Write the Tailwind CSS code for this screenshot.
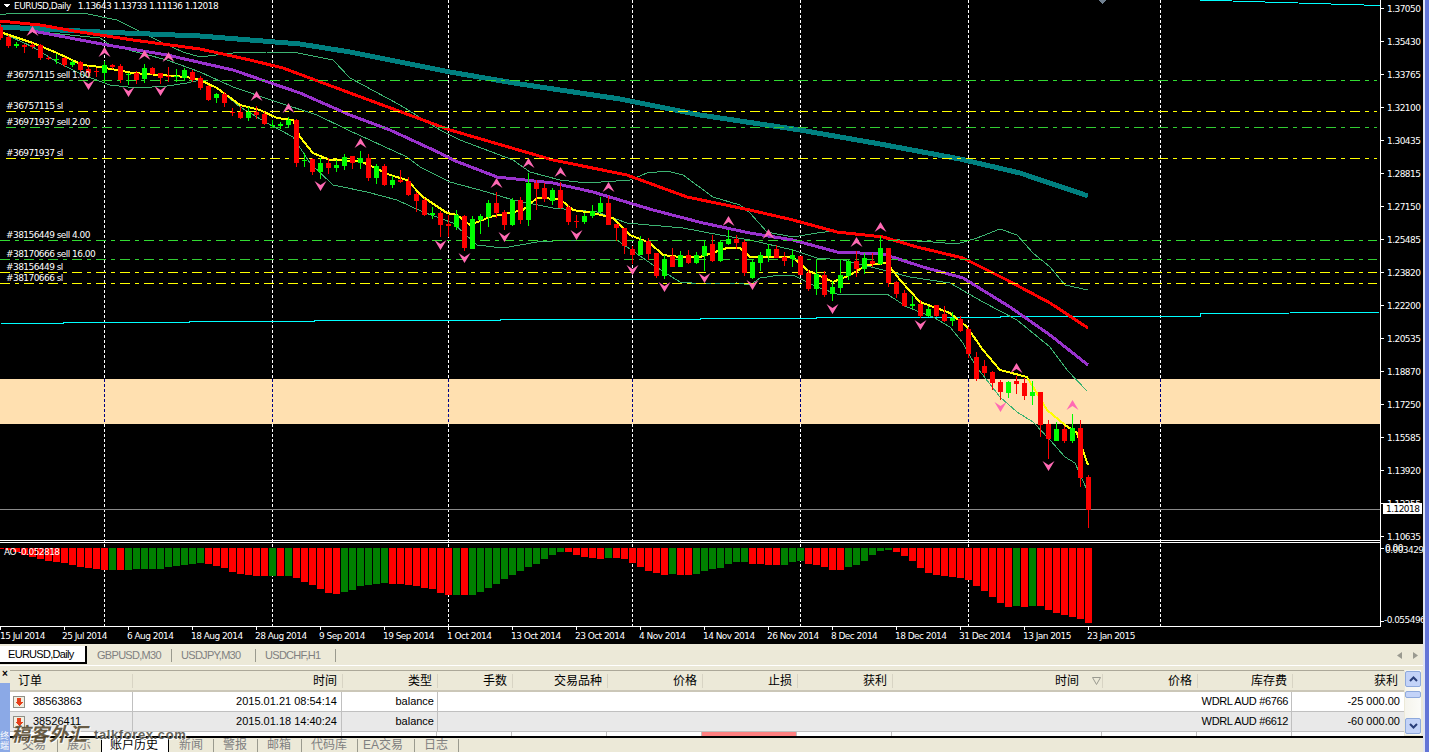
<!DOCTYPE html>
<html lang="zh">
<head>
<meta charset="utf-8">
<title>MT4 EURUSD</title>
<script src="https://cdn.jsdelivr.net/npm/@tailwindcss/browser@4"></script>
</head>
<body class="m-0 bg-[#ece9d8]">
<div class="relative flex h-[752px] w-[1429px] overflow-hidden bg-[#ece9d8] font-['Liberation_Sans','Noto_Sans_CJK_SC',sans-serif] text-[11px] text-black">
  <div class="flex h-full w-[1423px] flex-col">
    <!-- chart -->
    <div class="relative h-[644px] w-full bg-black">
      <svg id="chart" width="1423" height="644" viewBox="0 0 1423 644" class="block fill-white font-['DejaVu_Sans',sans-serif] text-[9px] tracking-[-0.55px]">
        <rect x="0" y="379" width="1380" height="45" fill="#ffe0b0"/>
        <g id="grid" shape-rendering="crispEdges"></g>
        <g fill="none" shape-rendering="crispEdges">
          <polyline stroke="#00ffff" points="1,323 63,323 63,322 189,322 189,321 314,321 314,320 500,320 500,319 700,319 700,318 816,318 816,317 1000,317 1000,316 1200,316 1200,314 1380,312"/>
          <polyline stroke="#00ffff" points="1199,0 1232,1 1265,2 1298,3 1331,4 1364,5 1381,5"/>
          <polyline stroke="#3cb371" points="0,15 13,13 33,13 83,13 117,20 143,33 163,43 183,52 200,57 233,53 267,52 293,52 333,60 350,78 400,105 440,130 460,140 513,160 530,172 560,180 587,183 630,180 647,173 667,171 683,175 713,197 740,205 750,213 767,232 793,237 817,233 833,231 867,235 900,240 933,242 957,244 977,238 1000,229 1017,235 1033,253 1050,267 1065,285 1088,290"/>
          <polyline stroke="#3cb371" points="0,26 40,32 100,38 110,45 140,53 167,60 200,72 233,87 277,102 317,115 348,130 407,157 420,167 450,182 487,192 513,200 553,208 597,212 627,223 683,228 720,235 750,240 793,250 817,258 843,260 883,270 910,277 950,283 983,302 1017,320 1050,347 1067,370 1087,391"/>
          <polyline stroke="#3cb371" points="0,32 33,47 57,62 83,75 110,85 137,88 167,86 187,83 200,80 217,88 240,107 267,123 293,137 310,163 333,185 367,192 397,200 423,212 453,223 477,245 503,248 537,242 570,240 617,240 653,265 680,282 703,284 737,283 750,285 760,278 780,275 793,275 817,287 837,294 860,294 887,294 907,307 933,317 950,327 963,343 975,365 1000,397 1017,412 1033,422 1050,440 1065,457 1075,463 1087,490"/>
          <polyline stroke="#008080" stroke-width="5" points="0,27 100,32 200,36 300,44 350,52 450,72 520,84 620,99 700,115 800,130 880,144 960,159 1020,173 1088,196"/>
          <polyline stroke="#ff0000" stroke-width="3" points="0,21 40,25 80,32 100,35 133,40 200,49 250,60 283,68 350,93 450,130 553,160 627,175 687,197 750,210 793,220 837,232 883,237 917,247 963,258 1007,280 1050,303 1088,328"/>
          <polyline stroke="#9932cc" stroke-width="3" points="33,31 107,45 167,55 233,70 300,93 350,115 390,130 440,153 453,160 497,177 553,183 593,192 653,210 703,223 750,233 793,240 837,252 883,254 923,267 963,278 1010,307 1050,335 1088,365"/>
          <polyline stroke="#ffff00" stroke-width="2" points="0,32 33,43 57,53 83,65 100,67 133,73 187,77 200,80 217,88 240,105 260,110 277,118 293,120 300,137 313,153 330,160 360,161 390,175 407,180 423,197 447,213 457,215 470,225 490,217 523,210 537,198 560,199 573,210 593,213 613,218 630,235 650,243 663,255 680,257 700,257 727,248 740,248 750,257 793,257 807,270 833,282 850,275 867,265 887,263 900,280 920,302 950,313 967,327 983,350 1000,370 1027,377 1047,410 1065,425 1077,433 1088,465"/>
        </g>
        <g fill="none" stroke-dasharray="10,5,4,5" shape-rendering="crispEdges">
          <line x1="6" x2="1377" y1="80.5" y2="80.5" stroke="#32dc32"/>
          <line x1="6" x2="1377" y1="111.5" y2="111.5" stroke="#ffff00"/>
          <line x1="6" x2="1377" y1="127.5" y2="127.5" stroke="#32cd32"/>
          <line x1="6" x2="1377" y1="158.5" y2="158.5" stroke="#ffff00"/>
          <line x1="0" x2="1377" y1="240.5" y2="240.5" stroke="#32dc32"/>
          <line x1="0" x2="1377" y1="259.5" y2="259.5" stroke="#32cd32"/>
          <line x1="0" x2="1377" y1="272.5" y2="272.5" stroke="#ffff00"/>
          <line x1="0" x2="1377" y1="283.5" y2="283.5" stroke="#ffff00"/>
          <line x1="0" x2="1380" y1="509.5" y2="509.5" stroke="#8a8a8a" stroke-dasharray="none"/>
        </g>
        <g id="candles" shape-rendering="crispEdges"></g>
        <g id="arrows" fill="#ff69b4"></g>
        <g id="ao" shape-rendering="crispEdges"></g>
        <!-- frame -->
        <g shape-rendering="crispEdges" fill="#ffffff">
          <rect x="0" y="540" width="1381" height="1"/>
          <rect x="0" y="542" width="1381" height="1"/>
          <rect x="0" y="626" width="1381" height="1"/>
          <rect x="1380" y="0" width="1" height="627"/>
          <g id="ticks"></g>
        </g>
        <path d="M3 3.5h8l-4 4z" fill="#ffffff" shape-rendering="crispEdges"/>
        <path d="M1098 0h8l-4 4z" fill="#708090" shape-rendering="crispEdges"/>
        <text x="14" y="9">EURUSD,Daily&#160;&#160;&#160;1.13643 1.13733 1.11136 1.12018</text>
        <g>
          <text x="6" y="78">#36757115 sell 1.00</text>
          <text x="6" y="109">#36757115 sl</text>
          <text x="6" y="125">#36971937 sell 2.00</text>
          <text x="6" y="156">#36971937 sl</text>
          <text x="6" y="238">#38156449 sell 4.00</text>
          <text x="6" y="257">#38170666 sell 16.00</text>
          <text x="6" y="270">#38156449 sl</text>
          <text x="6" y="281">#38170666 sl</text>
          <text x="4" y="555">AO -0.052818</text>
        </g>
        <g>
          <text x="1387" y="12">1.37050</text><text x="1387" y="45">1.35430</text><text x="1387" y="78">1.33765</text>
          <text x="1387" y="111">1.32100</text><text x="1387" y="144">1.30435</text><text x="1387" y="177">1.28815</text>
          <text x="1387" y="210">1.27150</text><text x="1387" y="243">1.25485</text><text x="1387" y="276">1.23820</text>
          <text x="1387" y="309">1.22200</text><text x="1387" y="342">1.20535</text><text x="1387" y="375">1.18870</text>
          <text x="1387" y="408">1.17250</text><text x="1387" y="441">1.15585</text><text x="1387" y="474">1.13920</text>
          <text x="1387" y="507">1.12255</text><text x="1387" y="540">1.10635</text>
        </g>
        <rect x="1383" y="503" width="39" height="11" fill="#ffffff" shape-rendering="crispEdges"/>
        <text x="1386" y="512" class="fill-black">1.12018</text>
        <text x="1385" y="551">0.00</text>
        <text x="1385" y="553">0.003429</text>
        <text x="1384" y="623">-0.055496</text>
        <g>
          <text x="0" y="639">15 Jul 2014</text><text x="62" y="639">25 Jul 2014</text><text x="127" y="639">6 Aug 2014</text>
          <text x="191" y="639">18 Aug 2014</text><text x="255" y="639">28 Aug 2014</text><text x="319" y="639">9 Sep 2014</text>
          <text x="383" y="639">19 Sep 2014</text><text x="447" y="639">1 Oct 2014</text><text x="511" y="639">13 Oct 2014</text>
          <text x="575" y="639">23 Oct 2014</text><text x="639" y="639">4 Nov 2014</text><text x="703" y="639">14 Nov 2014</text>
          <text x="767" y="639">26 Nov 2014</text><text x="831" y="639">8 Dec 2014</text><text x="895" y="639">18 Dec 2014</text>
          <text x="959" y="639">31 Dec 2014</text><text x="1023" y="639">13 Jan 2015</text><text x="1087" y="639">23 Jan 2015</text>
        </g>
      </svg>
    </div>

    <!-- chart tabs -->
    <div class="flex h-[22px] items-stretch border-b border-white bg-[#ece9d8] pt-[2px] pb-px tracking-[-0.7px]">
      <div class="flex w-[87px] items-center border-r-2 border-b-2 border-black bg-white pl-2 pr-1">EURUSD,Daily</div>
      <div class="flex w-[85px] items-center pl-[10px]"><span class="flex-1 text-[#808080]">GBPUSD,M30</span><span class="h-[13px] w-px bg-[#9a9a8e]"></span></div>
      <div class="flex w-[84px] items-center pl-[9px]"><span class="flex-1 text-[#808080]">USDJPY,M30</span><span class="h-[13px] w-px bg-[#9a9a8e]"></span></div>
      <div class="flex w-[80px] items-center pl-[9px]"><span class="flex-1 text-[#808080]">USDCHF,H1</span><span class="h-[13px] w-px bg-[#9a9a8e]"></span></div>
      <div class="ml-auto flex items-center gap-[11px] pr-[5px]">
        <svg width="5" height="7" viewBox="0 0 5 7" class="fill-[#9a9a90]"><path d="M5 0v7L0 3.5z"/></svg>
        <svg width="5" height="7" viewBox="0 0 5 7" class="fill-[#9a9a90]"><path d="M0 0v7l5-3.5z"/></svg>
      </div>
    </div>

    <!-- terminal -->
    <div class="flex h-[70px] pt-[4px]">
      <div class="flex w-[10px] flex-col">
        <div class="flex h-[12px] items-start justify-center text-[10px] leading-[8px] font-bold">&#215;</div>
        <div class="mt-auto h-[69px] -mb-[16px] overflow-hidden bg-[#8ba9e6] pt-[48px] text-[9px] leading-[10px] text-white">终端</div>
      </div>
      <div class="flex w-[1412px] flex-col">
        <div class="flex">
          <div class="w-[1394px]">
            <div class="grid h-[20px] grid-cols-[122px_210px_95px_75px_95px_95px_95px_95px_210px_95px_95px_110px] items-center border-t border-[#aca899] bg-[#ece9d8] text-[12px]">
              <div class="ml-[8px] flex h-[14px] items-center border-r border-transparent">订单</div>
              <div class="h-[14px] border-l border-[#d8d4c4] pr-[5px] text-right leading-[14px]">时间</div>
              <div class="h-[14px] border-l border-[#d8d4c4] pr-[5px] text-right leading-[14px]">类型</div>
              <div class="h-[14px] border-l border-[#d8d4c4] pr-[5px] text-right leading-[14px]">手数</div>
              <div class="h-[14px] border-l border-[#d8d4c4] pr-[5px] text-right leading-[14px]">交易品种</div>
              <div class="h-[14px] border-l border-[#d8d4c4] pr-[5px] text-right leading-[14px]">价格</div>
              <div class="h-[14px] border-l border-[#d8d4c4] pr-[5px] text-right leading-[14px]">止损</div>
              <div class="h-[14px] border-l border-[#d8d4c4] pr-[5px] text-right leading-[14px]">获利</div>
              <div class="flex h-[14px] items-center justify-end border-l border-[#d8d4c4] leading-[14px]">
                <span>时间</span>
                <svg width="9" height="8" viewBox="0 0 9 8" class="mr-[1px] ml-[13px] fill-none stroke-[#9a9a90]"><path d="M0.5 0.5h8l-4 7z"/></svg>
              </div>
              <div class="h-[14px] border-l border-[#d8d4c4] pr-[5px] text-right leading-[14px]">价格</div>
              <div class="h-[14px] border-l border-[#d8d4c4] pr-[5px] text-right leading-[14px]">库存费</div>
              <div class="h-[14px] border-l border-[#d8d4c4] pr-[4px] text-right leading-[14px]">获利</div>
            </div>
            <div class="h-[2px] bg-[#cbc7b8]"></div>
            <div class="grid h-[20px] grid-cols-[122px_210px_95px_855px_112px] items-center border-b border-[#c0c0c0] bg-white text-[#000]">
              <div class="flex h-full items-center gap-[8px] pl-[3px]">
                <svg width="12" height="12" viewBox="0 0 12 12" shape-rendering="crispEdges"><rect x="0.5" y="0.5" width="11" height="11" rx="1" fill="#f2eee0" stroke="#8f8f86"/><path d="M4 2h4v4h2l-4 4-4-4h2z" fill="#e6401c"/></svg>
                <span>38563863</span>
              </div>
              <div class="flex h-full items-center justify-end border-x border-[#c0c0c0] pr-[4px]">2015.01.21 08:54:14</div>
              <div class="flex h-full items-center justify-end pr-[3px]">balance</div>
              <div class="flex h-full items-center justify-end border-x border-[#c0c0c0] pr-[3px] tracking-[-0.35px]">WDRL AUD #6766</div>
              <div class="flex h-full items-center justify-end pr-[4px]">-25 000.00</div>
            </div>
            <div class="grid h-[20px] grid-cols-[122px_210px_95px_855px_112px] items-center border-b border-[#c0c0c0] bg-[#e9e9e9]">
              <div class="flex h-full items-center gap-[8px] pl-[3px]">
                <svg width="12" height="12" viewBox="0 0 12 12" shape-rendering="crispEdges"><rect x="0.5" y="0.5" width="11" height="11" rx="1" fill="#f2eee0" stroke="#8f8f86"/><path d="M4 2h4v4h2l-4 4-4-4h2z" fill="#e6401c"/></svg>
                <span>38526411</span>
              </div>
              <div class="flex h-full items-center justify-end border-x border-[#c0c0c0] pr-[4px]">2015.01.18 14:40:24</div>
              <div class="flex h-full items-center justify-end pr-[3px]">balance</div>
              <div class="flex h-full items-center justify-end border-x border-[#c0c0c0] pr-[3px] tracking-[-0.35px]">WDRL AUD #6612</div>
              <div class="flex h-full items-center justify-end pr-[4px]">-60 000.00</div>
            </div>
            <div class="grid h-[4px] grid-cols-[122px_210px_95px_75px_95px_95px_95px_95px_210px_95px_95px_112px] bg-white">
              <div class="border-r border-[#c0c0c0]"></div><div class="border-r border-[#c0c0c0]"></div><div class="border-r border-[#c0c0c0]"></div><div class="border-r border-[#c0c0c0]"></div><div class="border-r border-[#c0c0c0]"></div><div class="border-r border-[#c0c0c0]"></div>
              <div class="border-r border-[#c0c0c0] bg-[#ff8080]"></div><div class="border-r border-[#c0c0c0]"></div><div class="border-r border-[#c0c0c0]"></div><div class="border-r border-[#c0c0c0]"></div><div class="border-r border-[#c0c0c0]"></div><div></div>
            </div>
          </div>
          <!-- scrollbar -->
          <div class="ml-px flex h-[65px] w-[16px] flex-col bg-gradient-to-r from-[#f5f4ec] to-[#fbfbf8] pt-px">
            <div class="flex h-[16px] items-center justify-center rounded-[2px] border border-[#8ea9dc] bg-[#c3d3f8]">
              <svg width="9" height="6" viewBox="0 0 9 6" class="fill-none stroke-[#2a3f7a] stroke-2"><path d="M1 5l3.5-3.5L8 5"/></svg>
            </div>
            <div class="mt-[4px] h-[7px] rounded-[2px] border border-[#8ea9dc] bg-[#c3d3f8]"></div>
            <div class="mt-auto mb-px flex h-[16px] items-center justify-center rounded-[2px] border border-[#8ea9dc] bg-[#c3d3f8]">
              <svg width="9" height="6" viewBox="0 0 9 6" class="fill-none stroke-[#2a3f7a] stroke-2"><path d="M1 1l3.5 3.5L8 1"/></svg>
            </div>
          </div>
        </div>
      </div>
    </div>

    <!-- terminal tabs -->
    <div class="ml-[10px] flex h-[16px] border-t-2 border-black bg-[#ece9d8] pl-[2px] text-[12px] leading-[14px] text-[#808080]">
      <div class="flex w-[46px] items-center justify-end"><span class="mr-[11px]">交易</span><span class="h-[13px] w-px bg-[#9a9a8e]"></span></div>
      <div class="flex w-[43px] items-center justify-end"><span class="mr-[10px]">展示</span></div>
      <div class="flex w-[68px] items-center justify-end border-x border-black bg-white text-black"><span class="mr-[10px]">账户历史</span></div>
      <div class="flex w-[45px] items-center justify-end"><span class="mr-[10px]">新闻</span><span class="h-[13px] w-px bg-[#9a9a8e]"></span></div>
      <div class="flex w-[44px] items-center justify-end"><span class="mr-[10px]">警报</span><span class="h-[13px] w-px bg-[#9a9a8e]"></span></div>
      <div class="flex w-[44px] items-center justify-end"><span class="mr-[10px]">邮箱</span><span class="h-[13px] w-px bg-[#9a9a8e]"></span></div>
      <div class="flex w-[56px] items-center justify-end"><span class="mr-[10px]">代码库</span><span class="h-[13px] w-px bg-[#9a9a8e]"></span></div>
      <div class="flex w-[57px] items-center justify-end"><span class="mr-[11px]">EA交易</span><span class="h-[13px] w-px bg-[#9a9a8e]"></span></div>
      <div class="flex w-[44px] items-center justify-end"><span class="mr-[10px]">日志</span><span class="h-[13px] w-px bg-[#9a9a8e]"></span></div>
    </div>
  </div>

  <!-- window edge -->
  <div class="flex h-full w-[6px]">
    <div class="w-[2px] bg-[#dfe4f3]"></div>
    <div class="w-[4px] bg-[#6375d6]"></div>
  </div>

  <!-- watermark over the terminal tabs -->
  <div class="absolute top-[725px] left-[11px] flex items-end gap-[7px] text-[#5a4d35] opacity-90 [text-shadow:1px_1px_0_#fff]">
    <span class="text-[19px] leading-[20px] font-bold italic">稿客外汇</span>
    <span class="mb-[3px] text-[13px] leading-[14px] font-bold tracking-[0.6px] text-[#55554c]">talkforex.com</span>
  </div>
</div>

<script>
(function () {
  var NS = 'http://www.w3.org/2000/svg';
  function el(parent, name, attrs) {
    var n = document.createElementNS(NS, name);
    for (var a in attrs) n.setAttribute(a, attrs[a]);
    parent.appendChild(n);
    return n;
  }
  // [body top, body bottom, high, low, up?]
  var C = [
    [27,38,24,40,0],[37,46,35,48,0],[44,46,42,48,1],[45,47,44,53,0],[45,47,43,49,0],[45,58,44,60,0],[58,59,56,60,0],[59,60,54,64,1],
    [58,65,57,67,0],[62,65,60,67,1],[62,70,61,72,0],[69,73,66,78,0],[71,72,68,77,0],[65,73,61,83,1],[65,67,64,69,0],[66,80,64,83,0],
    [74,75,73,85,1],[73,80,71,84,0],[68,79,64,83,1],[68,74,67,75,0],[73,78,73,84,0],[76,77,67,82,0],[76,77,69,82,1],[70,78,68,81,1],
    [72,80,70,82,0],[78,88,76,90,0],[86,100,85,101,0],[94,98,93,103,1],[94,103,92,107,0],[112,113,108,116,0],[112,118,106,119,0],[112,118,107,121,1],
    [112,115,106,119,0],[114,124,112,125,0],[125,126,120,128,1],[124,126,122,129,1],[120,125,117,127,1],[120,163,119,167,0],[160,161,153,167,1],[159,172,158,175,0],
    [163,172,158,179,1],[163,168,158,174,0],[165,168,160,172,1],[157,166,154,170,1],[156,163,156,169,0],[158,163,151,169,1],[158,178,154,181,0],[166,178,164,184,1],
    [166,185,164,186,0],[180,185,176,188,1],[180,182,170,183,0],[181,195,177,196,0],[194,201,192,212,0],[200,215,198,216,0],[213,215,207,219,1],[213,225,211,237,0],
    [224,226,215,237,0],[215,227,210,230,1],[216,248,215,251,0],[219,249,216,249,1],[216,220,214,234,1],[203,217,200,227,1],[203,213,192,218,0],[212,225,210,230,0],
    [200,225,198,226,1],[200,220,197,224,0],[183,220,173,226,1],[183,189,180,210,0],[188,199,183,202,0],[190,201,188,205,1],[190,208,182,209,0],[207,222,205,225,0],
    [221,222,215,228,0],[216,222,213,224,1],[211,216,205,218,1],[203,212,197,213,1],[203,225,196,225,0],[224,228,224,241,0],[228,246,228,254,0],[249,255,246,264,0],
    [241,255,236,255,1],[241,254,238,260,0],[253,276,253,278,0],[259,276,255,279,1],[256,267,248,267,0],[255,267,251,267,1],[255,263,250,264,0],[255,263,252,264,1],
    [246,256,240,271,1],[244,261,235,262,0],[242,261,240,262,1],[239,244,230,245,1],[239,243,235,249,0],[242,273,240,276,0],[262,278,260,279,1],[255,263,252,271,1],
    [249,256,244,262,1],[249,258,245,258,0],[257,261,252,266,0],[255,259,249,267,1],[256,275,256,275,0],[273,289,270,291,0],[274,289,260,295,1],[275,295,271,297,0],
    [287,294,281,301,1],[275,288,260,293,1],[261,276,260,280,1],[261,269,251,277,0],[258,269,253,274,1],[261,264,253,267,0],[248,264,236,265,1],[248,283,248,287,0],
    [282,294,281,298,0],[293,306,290,307,0],[304,306,296,309,1],[304,316,300,318,0],[309,316,306,317,1],[305,316,305,317,0],[314,321,306,322,0],[318,321,312,326,1],
    [319,331,316,332,0],[329,354,327,358,0],[357,379,352,381,0],[366,373,360,376,0],[372,383,371,390,0],[382,392,380,400,0],[382,393,381,398,1],[381,384,376,394,0],
    [383,396,378,400,0],[392,396,381,405,1],[392,425,392,437,0],[424,439,420,459,0],[429,441,422,441,1],[429,441,426,443,0],[428,441,414,443,1],[428,478,420,487,0],
    [477,510,475,528,0]
  ];
  var cg = document.getElementById('candles');
  C.forEach(function (c, k) {
    var col = c[4] ? '#00ff00' : '#ff0000', x = 8 * k;
    el(cg, 'rect', { x: x, y: c[2], width: 1, height: c[3] - c[2], fill: col });
    el(cg, 'rect', { x: x - 2, y: c[0], width: 5, height: Math.max(1, c[1] - c[0]), fill: col });
  });

  // Awesome oscillator: bottom of each bar in 3x zoom units, 0 = red, 1 = green
  var A = [
    [33,0],[36,0],[42,0],[50,0],[57,0],[63,0],[69,0],[72,0],[75,0],[81,0],[87,0],[90,0],[93,0],[96,0],[96,1],[96,0],[96,1],[93,1],[93,1],[93,1],[93,1],[87,1],[84,1],[81,1],[78,1],[75,1],
    [78,0],[84,0],[90,0],[102,0],[108,0],[111,0],[114,0],[114,0],[114,1],[114,0],[114,1],[120,0],[132,0],[141,0],[153,0],[165,0],[168,0],[162,1],[156,1],[144,1],[141,1],[138,1],[135,1],[138,0],
    [138,0],[141,0],[144,0],[150,0],[153,0],[165,0],[171,0],[171,1],[171,0],[171,1],[162,1],[150,1],[138,1],[123,1],[111,1],[99,1],[87,1],[78,1],[63,1],[51,1],[42,1],[42,0],[51,0],[57,0],[60,0],[63,0],
    [60,1],[60,0],[63,0],[75,0],[87,0],[99,0],[105,0],[111,0],[108,1],[111,0],[111,0],[108,1],[99,1],[93,1],[90,1],[78,1],[72,1],[72,1],[78,0],[78,0],[81,0],[81,0],[81,1],[72,1],[69,1],
    [78,0],[81,0],[87,0],[96,0],[96,0],[87,1],[81,1],[69,1],[51,1],[39,1],[36,1],[42,0],[54,0],[69,0],[90,0],[105,0],[111,0],[114,0],[117,0],[120,0],[126,0],[144,0],[159,0],[177,0],[195,0],[207,0],[204,1],[207,0],[204,1],[204,0],[216,0],[225,0],[231,0],[237,0],[243,0],[255,0]
  ];
  var ag = document.getElementById('ao');
  A.forEach(function (a, k) {
    var x = 8 * k - 3, h = Math.round((a[0] - 30) / 3);
    if (x < 0) { el(ag, 'rect', { x: 0, y: 548, width: x + 7, height: h, fill: '#ff0000' }); return; }
    el(ag, 'rect', { x: x, y: 548, width: 7, height: h, fill: a[1] ? '#008000' : '#ff0000' });
  });

  var ar = document.getElementById('arrows');
  [[32,31],[104,52],[144,55],[168,57],[256,96],[288,108],[360,143],[496,183],[528,163],[560,172],[608,187],[728,221],[768,234],[856,242],[880,227],[1016,368],[1072,405]].forEach(function (p) {
    var x = p[0] + .5, t = p[1] - 5;
    el(ar, 'path', { d: 'M' + x + ' ' + t + 'L' + (x + 6) + ' ' + (t + 10) + 'L' + x + ' ' + (t + 6) + 'L' + (x - 6) + ' ' + (t + 10) + 'Z' });
  });
  [[88,85],[128,92],[160,91],[320,186],[440,245],[464,258],[504,237],[576,235],[632,270],[664,287],[704,278],[752,285],[832,309],[920,325],[1000,407],[1048,466]].forEach(function (p) {
    var x = p[0] + .5, t = p[1] - 5;
    el(ar, 'path', { d: 'M' + (x - 6) + ' ' + t + 'L' + x + ' ' + (t + 4) + 'L' + (x + 6) + ' ' + t + 'L' + x + ' ' + (t + 10) + 'Z' });
  });

  // vertical dashed grid
  var gg = document.getElementById('grid');
  [104, 272, 448, 632, 800, 968, 1160].forEach(function (x) {
    el(gg, 'line', { x1: x + .5, x2: x + .5, y1: 0, y2: 379, stroke: '#ffffff', 'stroke-dasharray': '3,2' });
    el(gg, 'line', { x1: x + .5, x2: x + .5, y1: 379, y2: 424, stroke: '#000080', 'stroke-dasharray': '3,2' });
    el(gg, 'line', { x1: x + .5, x2: x + .5, y1: 424, y2: 626, stroke: '#ffffff', 'stroke-dasharray': '3,2' });
  });

  // axis ticks
  var tg = document.getElementById('ticks');
  for (var i = 0; i < 17; i++) el(tg, 'rect', { x: 1381, y: 8 + 33 * i, width: 3, height: 1 });
  el(tg, 'rect', { x: 1381, y: 548, width: 3, height: 1 });
  el(tg, 'rect', { x: 1381, y: 621, width: 3, height: 1 });
  for (var j = 0; j < 18; j++) el(tg, 'rect', { x: 64 * j, y: 627, width: 1, height: 3 });
})();
</script>
</body>
</html>
